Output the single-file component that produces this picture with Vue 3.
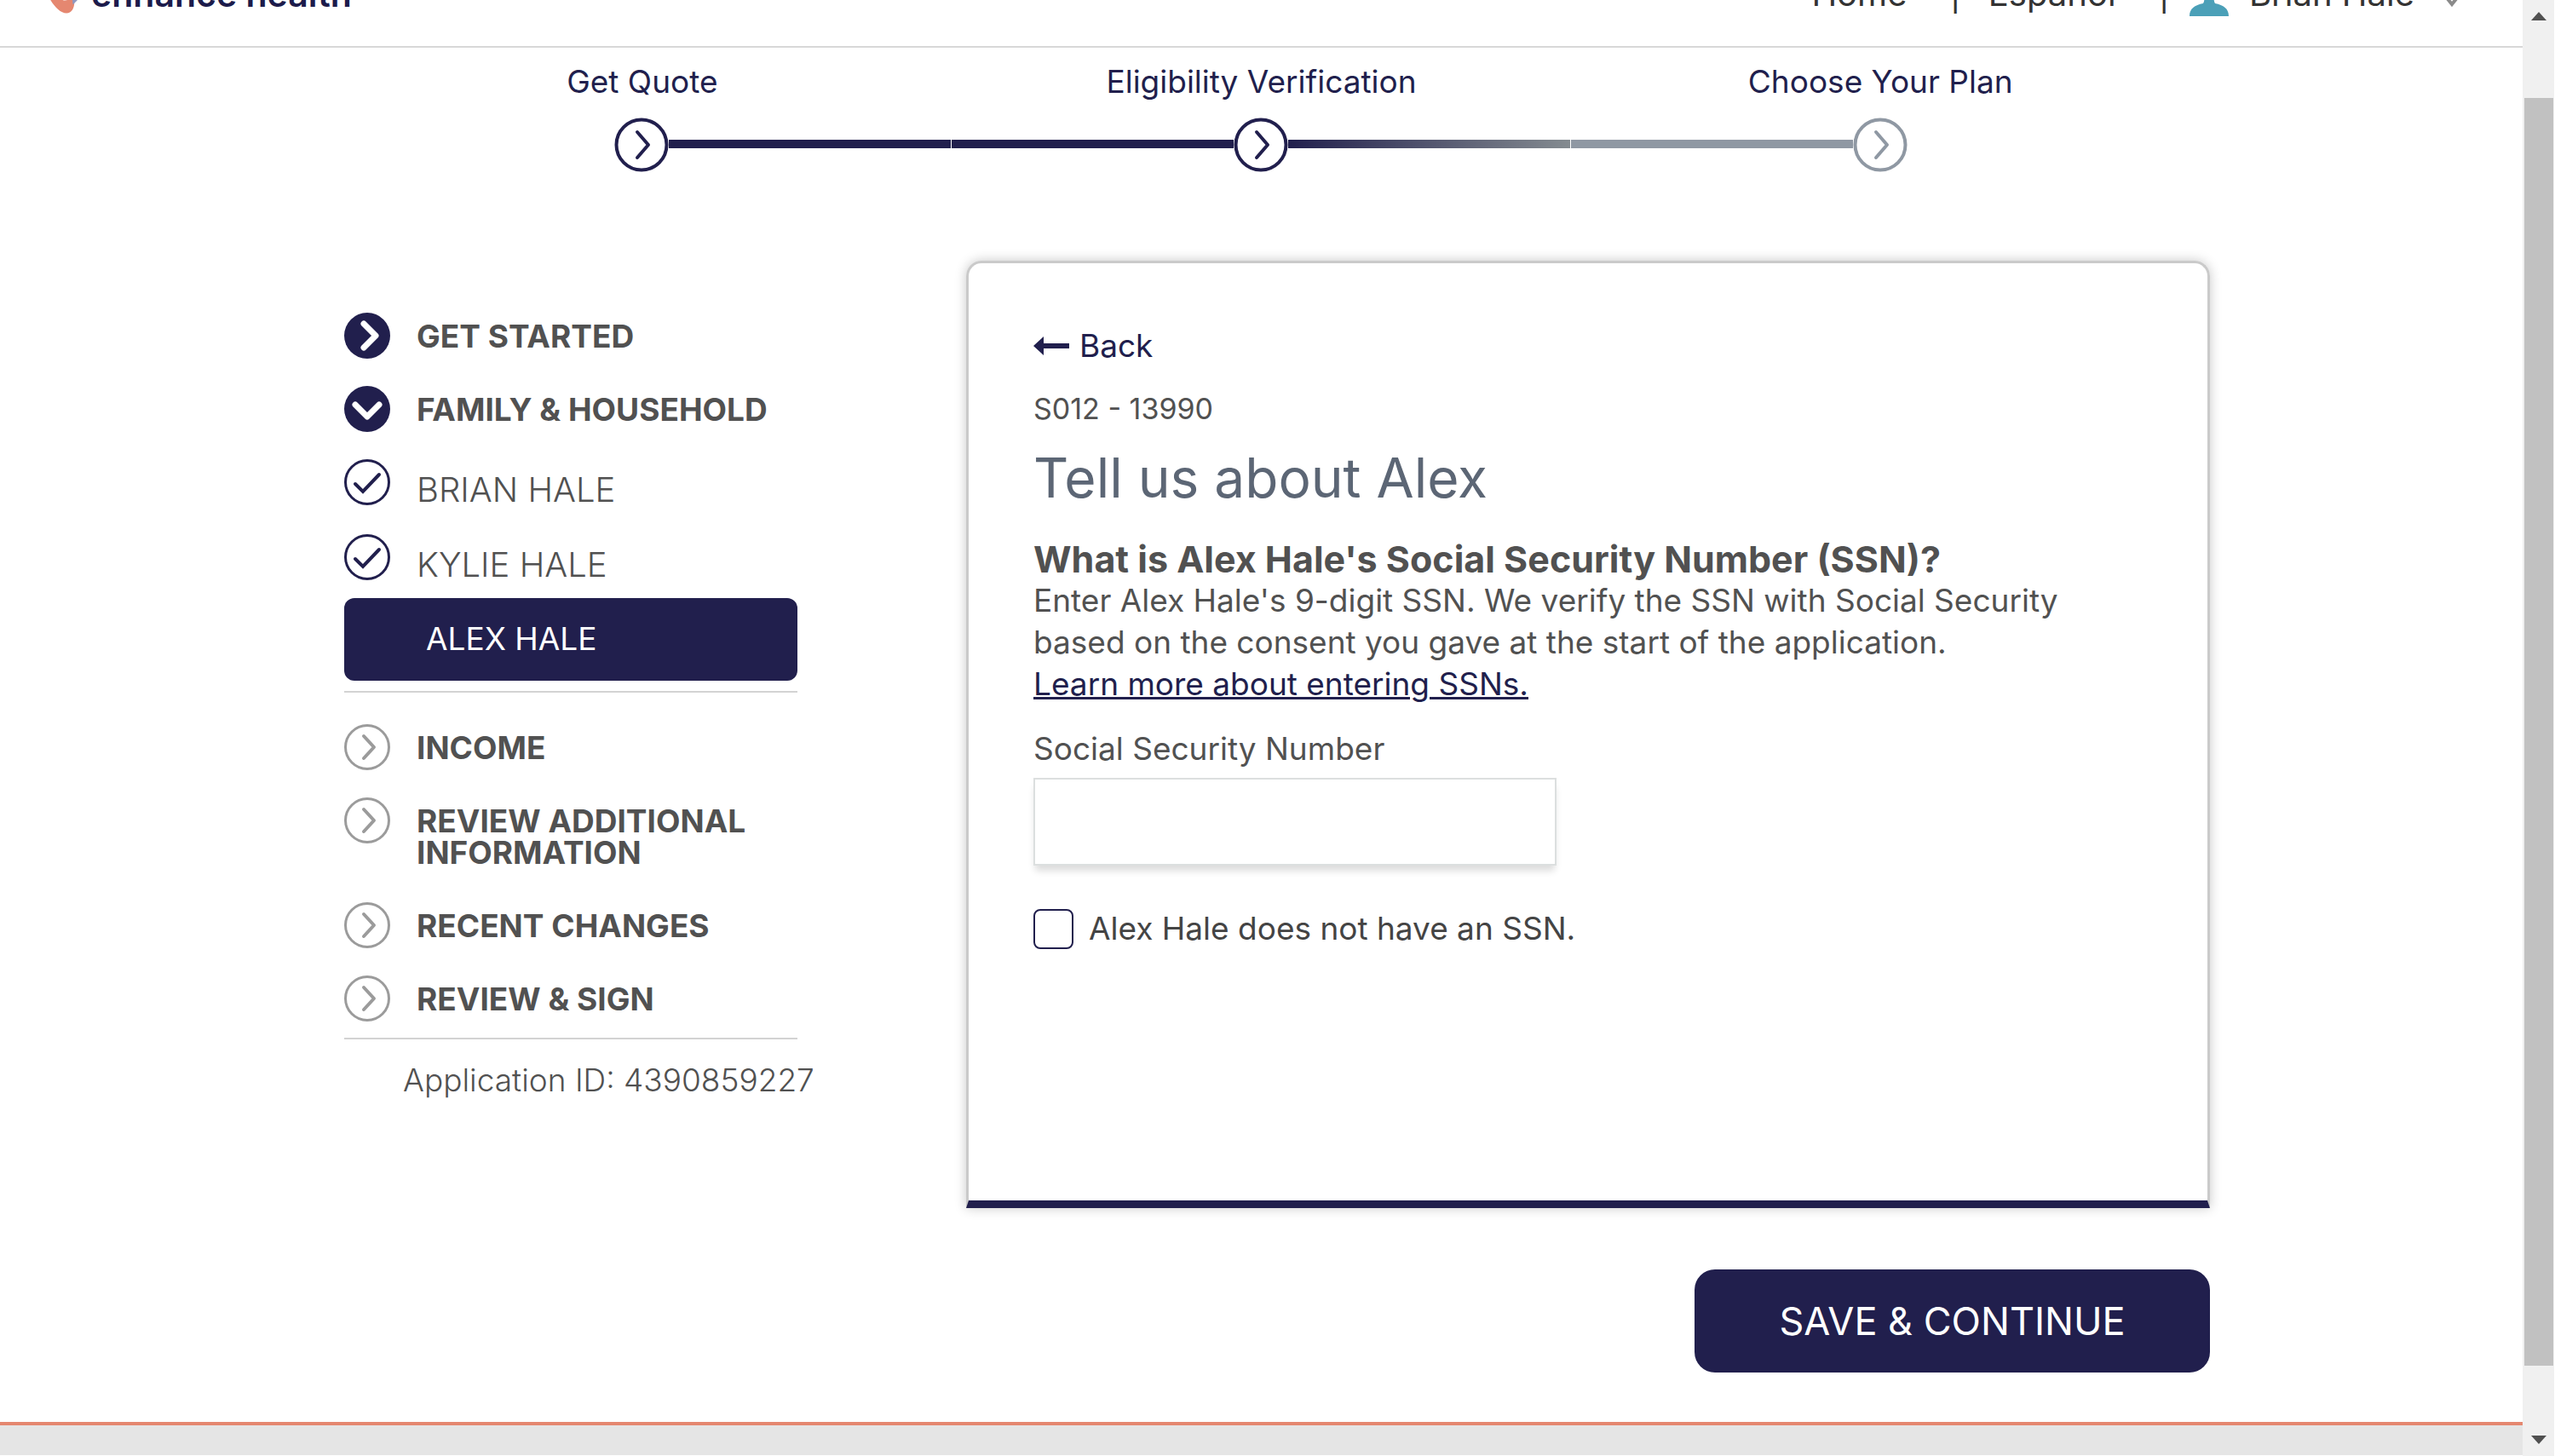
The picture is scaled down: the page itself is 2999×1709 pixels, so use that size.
<script setup>
import { ref } from 'vue'

const ssn = ref('')
const noSsn = ref(false)

const steps = [
  { label: 'Get Quote', state: 'done' },
  { label: 'Eligibility Verification', state: 'current' },
  { label: 'Choose Your Plan', state: 'todo' },
]
const members = ['BRIAN HALE', 'KYLIE HALE']
const upcoming = ['INCOME', 'REVIEW ADDITIONAL INFORMATION', 'RECENT CHANGES', 'REVIEW & SIGN']
</script>

<template>
  <div class="window">
    <div class="page">
      <header class="header">
        <a href="#" class="logo">
          <svg class="logo-mark" viewBox="0 0 60 66" aria-hidden="true">
            <path d="M1 30 C-2 18 6 8 18 10 C26 11 30 20 30 20 L20 34 C20 42 23 45 28 45 C33 45 36 42 38 36 L41 44 C42 54 38 63 30 63 C19 63 6 46 1 30Z" fill="#e58770" />
            <path d="M30 20 C36 8 50 6 56 16 C60 26 56 34 50 40 L39 51 L38 40 L44 30Z" fill="#8f98c0" />
          </svg>
          <span>enhance health</span>
        </a>
        <nav class="nav">
          <a href="#">Home</a>
          <span class="bar">|</span>
          <a href="#">Español</a>
          <span class="bar">|</span>
          <button type="button" class="user">
            <svg class="person" viewBox="0 0 46 52" aria-hidden="true">
              <path d="M23 2a13 13 0 0 1 8 23c-3 3-3 9-1 12 10 2 16 6 16 15H0c0-9 6-13 16-15 2-3 2-9-1-12A13 13 0 0 1 23 2Z" fill="#4ba0b8" />
            </svg>
            <span>Brian Hale</span>
            <svg class="caret" viewBox="0 0 20 16" aria-hidden="true">
              <path d="M2 3l8 10 8-10" fill="none" stroke="#8a8a8a" stroke-width="4" />
            </svg>
          </button>
        </nav>
      </header>

      <ol class="steps">
        <li v-for="step in steps" :key="step.label" :class="['step', step.state]">
          <span class="step-label">{{ step.label }}</span>
          <span class="track">
            <span class="line before"></span>
            <svg class="step-icon" viewBox="0 0 64 64" aria-hidden="true">
              <circle cx="32" cy="32" r="29.5" fill="#fff" stroke="currentColor" stroke-width="4" />
              <path d="M27 17l13 15-13 15" fill="none" stroke="currentColor" stroke-width="4" stroke-linecap="round" stroke-linejoin="round" />
            </svg>
            <span class="line after"></span>
          </span>
        </li>
      </ol>

      <main class="main">
        <aside class="sidebar">
          <ul class="menu">
            <li class="item">
              <svg class="icon" viewBox="0 0 54 54" aria-hidden="true">
                <circle cx="27" cy="27" r="27" fill="#211f4d" />
                <path d="M23 13l14 14-14 14" fill="none" stroke="#fff" stroke-width="7" stroke-linecap="round" stroke-linejoin="round" />
              </svg>
              <a href="#">GET STARTED</a>
            </li>
            <li class="item">
              <svg class="icon" viewBox="0 0 54 54" aria-hidden="true">
                <circle cx="27" cy="27" r="27" fill="#211f4d" />
                <path d="M13 22l14 14 14-14" fill="none" stroke="#fff" stroke-width="7" stroke-linecap="round" stroke-linejoin="round" />
              </svg>
              <a href="#">FAMILY &amp; HOUSEHOLD</a>
            </li>
          </ul>
          <ul class="menu members">
            <li v-for="name in members" :key="name" class="item sub">
              <svg class="icon" viewBox="0 0 54 54" aria-hidden="true">
                <circle cx="27" cy="27" r="25.5" fill="none" stroke="#211f4d" stroke-width="3" />
                <path d="M13 29l9 9 19-20" fill="none" stroke="#211f4d" stroke-width="4" stroke-linecap="round" />
              </svg>
              <a href="#">{{ name }}</a>
            </li>
          </ul>
          <button type="button" class="active">ALEX HALE</button>
          <ul class="menu upcoming">
            <li v-for="title in upcoming" :key="title" class="item">
              <svg class="icon" viewBox="0 0 54 54" aria-hidden="true">
                <circle cx="27" cy="27" r="25.5" fill="none" stroke="#9b9b9b" stroke-width="3" />
                <path d="M23 14l12 13-12 13" fill="none" stroke="#9b9b9b" stroke-width="4" stroke-linecap="round" stroke-linejoin="round" />
              </svg>
              <a href="#">{{ title }}</a>
            </li>
          </ul>
          <p class="app-id">Application ID: 4390859227</p>
        </aside>

        <form class="form" @submit.prevent>
          <section class="card">
            <a href="#" class="back">
              <svg class="arrow" viewBox="0 0 42 22" aria-hidden="true">
                <path d="M0 11L12 0V8H42V14H12V22Z" fill="#211f4d" />
              </svg>
              Back
            </a>
            <p class="code">S012 - 13990</p>
            <h1>Tell us about Alex</h1>
            <h2>What is Alex Hale's Social Security Number (SSN)?</h2>
            <p class="help">
              Enter Alex Hale's 9-digit SSN. We verify the SSN with Social Security<br />
              based on the consent you gave at the start of the application.<br />
              <a href="#">Learn more about entering SSNs.</a>
            </p>
            <label class="field-label" for="ssn">Social Security Number</label>
            <input id="ssn" v-model="ssn" class="field" type="text" />
            <div class="check">
              <input id="no-ssn" v-model="noSsn" type="checkbox" />
              <label for="no-ssn">Alex Hale does not have an SSN.</label>
            </div>
          </section>
          <button type="submit" class="save">SAVE &amp; CONTINUE</button>
        </form>
      </main>

      <footer class="footer"></footer>
    </div>

    <div class="scrollbar" aria-hidden="true">
      <svg viewBox="0 0 18 10"><path d="M9 0L18 10H0Z" fill="#505050" /></svg>
      <div class="thumb"></div>
      <svg viewBox="0 0 18 10"><path d="M0 0H18L9 10Z" fill="#505050" /></svg>
    </div>
  </div>
</template>

<style>
body {
  margin: 0;
  background: #fff;
}
</style>

<style scoped>
.window {
  display: flex;
  height: 100vh;
  overflow: hidden;
  padding-right: 1px;
  box-sizing: border-box;
  font-family: Inter, "Liberation Sans", sans-serif;
  font-size: 37px;
  font-weight: 400;
  line-height: 48px;
  color: #515151;
}
.window * {
  box-sizing: border-box;
}
a {
  color: inherit;
  text-decoration: none;
}
button,
input {
  font: inherit;
}
ul,
ol {
  list-style: none;
  margin: 0;
  padding: 0;
}
p,
h1,
h2 {
  margin: 0;
}
.page {
  flex: 1;
  min-width: 0;
}

.header {
  display: flex;
  justify-content: space-between;
  align-items: center;
  height: 120px;
  margin-top: -64px;
  padding: 0 73px 4px 53px;
  border-bottom: 2px solid #d8d8d8;
  color: #333;
}
.logo {
  display: flex;
  align-items: center;
  gap: 4px;
  font-size: 41px;
  font-weight: 600;
  color: #1c1b4b;
}
.logo-mark {
  width: 50px;
  height: 55px;
  margin-top: -6px;
}
.nav {
  display: flex;
  align-items: center;
  font-size: 40px;
}
.nav a {
  padding-left: 9px;
}
.bar {
  margin: 0 23px 0 50px;
}
.user {
  display: flex;
  align-items: center;
  padding: 0;
  border: 0;
  background: none;
  color: inherit;
}
.person {
  width: 46px;
  height: 52px;
  margin-right: 24px;
}
.caret {
  width: 20px;
  height: 16px;
  margin: 14px 0 0 34px;
}

.steps {
  display: flex;
  width: 2180px;
  max-width: 100%;
  margin: 0 auto;
  padding-top: 16px;
  color: #211f4d;
}
.step {
  flex: 1;
  text-align: center;
}
.track {
  display: flex;
  align-items: center;
  margin-top: 18px;
}
.step-icon {
  width: 64px;
  height: 64px;
  flex: none;
}
.line {
  flex: 1;
  height: 10px;
  margin-bottom: 3px;
  background: #211f4d;
}
.line.after {
  margin-right: 1px;
}
.step:first-child .before,
.step:last-child .after {
  visibility: hidden;
}
.current .after {
  background: linear-gradient(to right, #211f4d, #848b90);
}
.todo .line {
  background: #8f98a3;
}
.todo .step-icon {
  color: #8f98a3;
}

.main {
  display: grid;
  grid-template-columns: 532px 1fr;
  gap: 198px;
  padding: 104px 367px 58px 404px;
}
.sidebar {
  padding-top: 61px;
}
.menu {
  display: flex;
  flex-direction: column;
  gap: 29px;
  font-weight: 700;
}
.item {
  display: flex;
  align-items: flex-start;
  gap: 31px;
}
.item a {
  padding: 9px 0 11px;
  line-height: 37px;
}
.icon {
  flex: none;
  width: 54px;
  height: 54px;
}
.members {
  gap: 34px;
  margin-top: 29px;
  font-weight: 300;
}
.sub a {
  padding: 17px 0 0;
  font-size: 40px;
}
.active {
  display: block;
  width: 100%;
  height: 97px;
  margin: 21px 0 12px;
  padding: 0 96px 2px;
  border: 0;
  border-radius: 12px;
  background: #211f4d;
  color: #fff;
  text-align: left;
}
.upcoming {
  padding: 37px 0 16px;
  border-top: 2px solid #d3d3d3;
  border-bottom: 2px solid #d3d3d3;
}
.app-id {
  margin: 24px -30px 0 69px;
  font-weight: 300;
  white-space: nowrap;
}

.form {
  display: flex;
  flex-direction: column;
  align-items: flex-end;
}
.card {
  width: 100%;
  min-height: 1112px;
  padding: 73px 76px 0;
  border: 3px solid #cacaca;
  border-bottom: 9px solid #211f4d;
  border-radius: 18px 18px 0 0;
  box-shadow: 0 0 14px rgba(0, 0, 0, 0.22);
}
.back {
  display: flex;
  align-items: center;
  gap: 12px;
  color: #211f4d;
}
.arrow {
  width: 42px;
  height: 22px;
}
.code {
  margin-top: 26px;
  font-size: 34px;
}
h1 {
  margin-top: 21px;
  font-size: 64px;
  font-weight: 400;
  line-height: 72px;
  color: #5c6675;
}
h2 {
  margin-top: 35px;
  font-size: 43px;
  font-weight: 700;
  line-height: 48px;
}
.help {
  line-height: 49px;
}
.help a {
  color: #211f4d;
  text-decoration: underline;
  text-decoration-thickness: 3px;
}
.field-label {
  display: block;
  margin-top: 28px;
}
.field {
  display: block;
  width: 614px;
  height: 103px;
  margin-top: 10px;
  padding: 0 24px;
  border: 2px solid #dcdfdf;
  background: #fff;
  box-shadow: 0 8px 8px -2px rgba(0, 0, 0, 0.14);
}
.check {
  display: flex;
  align-items: center;
  gap: 18px;
  margin-top: 50px;
  color: #444;
}
.check input {
  appearance: none;
  width: 47px;
  height: 47px;
  margin: 0;
  border: 2px solid #211f4d;
  border-radius: 8px;
  background: #fff;
}
.check input:checked {
  background: #211f4d;
}
.save {
  width: 605px;
  height: 121px;
  margin-top: 72px;
  border: 0;
  border-radius: 24px;
  background: #211f4d;
  color: #fff;
  font-size: 45px;
}
.footer {
  height: 39px;
  border-top: 4px solid #e58770;
  background: #e5e5e5;
}

.scrollbar {
  flex: none;
  display: flex;
  flex-direction: column;
  align-items: center;
  width: 37px;
  padding: 14px 0;
  background: #f0f0f0;
}
.scrollbar svg {
  flex: none;
  width: 18px;
  height: 10px;
}
.thumb {
  flex: 1;
  width: 34px;
  margin: 91px 0 82px;
  background: #c1c1c1;
}
</style>
